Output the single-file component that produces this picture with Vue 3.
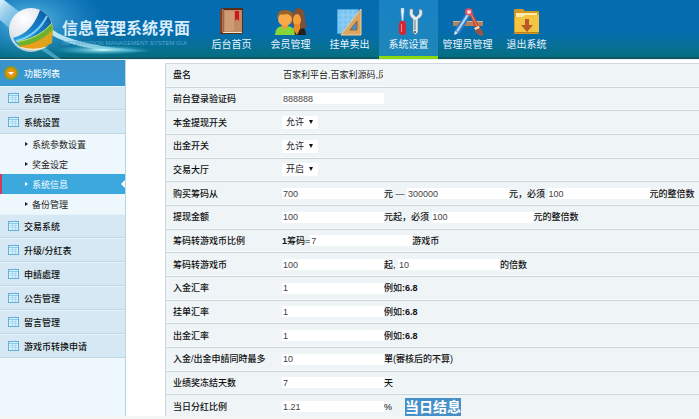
<script setup>
import { reactive, ref } from 'vue'

const navItems = [
    { id: 'home', label: '后台首页' },
    { id: 'members', label: '会员管理' },
    { id: 'orders', label: '挂单卖出' },
    { id: 'settings', label: '系统设置' },
    { id: 'admins', label: '管理员管理' },
    { id: 'logout', label: '退出系统' }
]
const activeNav = ref('settings')

const menu = [
    { label: '会员管理' },
    { label: '系统设置', children: ['系统参数设置', '奖金设定', '系统信息', '备份管理'] },
    { label: '交易系统' },
    { label: '升级/分红表' },
    { label: '申請處理' },
    { label: '公告管理' },
    { label: '留言管理' },
    { label: '游戏币转换申请' }
]
const activeMenu = ref('系统信息')

const form = reactive({
    name: '百家利平台,百家利源码,凤凰',
    code: '888888',
    principal: '允许',
    withdraw: '允许',
    hall: '开启',
    buyMin: '700',
    buyMax: '300000',
    buyStep: '100',
    cashMin: '100',
    cashStep: '100',
    ratio: '7',
    convertMin: '100',
    convertStep: '10',
    rateIn: '1',
    rateOrder: '1',
    rateOut: '1',
    maxApply: '10',
    freezeDays: '7',
    bonus: '1.21'
})

// a part is plain text, or a field bound to a key of the form
const rateHint = { text: '例如', strong: ':6.8' }
const rows = [
    { label: '盘名', parts: [{ key: 'name', plain: true }] },
    { label: '前台登录验证码', parts: [{ key: 'code' }] },
    { label: '本金提现开关', parts: [{ key: 'principal', options: ['允许', '禁止'] }] },
    { label: '出金开关', parts: [{ key: 'withdraw', options: ['允许', '禁止'] }] },
    { label: '交易大厅', parts: [{ key: 'hall', options: ['开启', '关闭'] }] },
    { label: '购买筹码从', parts: [{ key: 'buyMin' }, { text: '元 — ' }, { key: 'buyMax' }, { text: '元，必须 ' }, { key: 'buyStep' }, { text: '元的整倍数' }] },
    { label: '提现金额', parts: [{ key: 'cashMin' }, { text: '元起，必须 ' }, { key: 'cashStep' }, { text: '元的整倍数' }] },
    { label: '筹码转游戏币比例', parts: [{ strong: '1', text: '筹码=', lead: true }, { key: 'ratio' }, { text: '游戏币' }] },
    { label: '筹码转游戏币', parts: [{ key: 'convertMin' }, { text: '起, ' }, { key: 'convertStep' }, { text: '的倍数' }] },
    { label: '入金汇率', parts: [{ key: 'rateIn' }, rateHint] },
    { label: '挂单汇率', parts: [{ key: 'rateOrder' }, rateHint] },
    { label: '出金汇率', parts: [{ key: 'rateOut' }, rateHint] },
    { label: '入金/出金申請同時最多', parts: [{ key: 'maxApply' }, { text: '單(審核后的不算)' }] },
    { label: '业绩奖冻结天数', parts: [{ key: 'freezeDays' }, { text: '天' }] },
    { label: '当日分红比例', parts: [{ key: 'bonus' }, { text: '%' }], action: '当日结息' }
]

function firstKey(row) {
    return row.parts.find((part) => part.key).key
}
</script>

<template>
    <div class="page">
        <header class="top">
            <svg class="glow" viewBox="0 0 200 59" aria-hidden="true">
                <defs>
                    <linearGradient id="beam" x1="0" y1="0" x2="1" y2="1">
                        <stop offset="0" stop-color="#e4f6ff" stop-opacity=".95" />
                        <stop offset="1" stop-color="#6cc0e8" stop-opacity=".1" />
                    </linearGradient>
                    <linearGradient id="tail" x1="0" y1="0" x2="1" y2="0">
                        <stop offset="0" stop-color="#d2f6ff" stop-opacity=".9" />
                        <stop offset=".5" stop-color="#b4ecf6" stop-opacity=".7" />
                        <stop offset="1" stop-color="#5cc4e0" stop-opacity=".1" />
                    </linearGradient>
                    <radialGradient id="flare">
                        <stop offset="0" stop-color="#e4ffff" />
                        <stop offset=".3" stop-color="#8fe0f0" stop-opacity=".7" />
                        <stop offset="1" stop-color="#4cc0dc" stop-opacity="0" />
                    </radialGradient>
                    <radialGradient id="haze">
                        <stop offset="0" stop-color="#6cc4ec" stop-opacity=".9" />
                        <stop offset="1" stop-color="#2f95d0" stop-opacity="0" />
                    </radialGradient>
                </defs>
                <ellipse cx="30" cy="20" rx="75" ry="42" fill="url(#haze)" />
                <path d="M0 0h4l26 20-14 14L0 20z" fill="url(#beam)" />
                <path d="M50 28q24 19 104 23-70 4-104-17z" fill="url(#tail)" />
                <path d="M43 46l18 13h-6L40 49z" fill="#7cd0ea" opacity=".5" />
                <ellipse cx="102" cy="50" rx="48" ry="5" fill="url(#flare)" />
            </svg>
            <div class="brand">
                <svg class="logo" viewBox="0 0 46 46" aria-hidden="true">
                    <defs>
                        <radialGradient id="ball" cx=".35" cy=".25" r=".8">
                            <stop offset="0" stop-color="#fff" />
                            <stop offset=".5" stop-color="#e3e9ee" />
                            <stop offset="1" stop-color="#a8c4d2" />
                        </radialGradient>
                        <linearGradient id="leaf" x1="0" y1="0" x2="1" y2="0">
                            <stop offset="0" stop-color="#f0981a" />
                            <stop offset=".6" stop-color="#e8a01c" />
                            <stop offset="1" stop-color="#d4a820" />
                        </linearGradient>
                        <linearGradient id="wave" x1="0" y1="1" x2="1" y2="0">
                            <stop offset="0" stop-color="#2fa6e4" />
                            <stop offset=".6" stop-color="#1478c2" />
                            <stop offset="1" stop-color="#0a5298" />
                        </linearGradient>
                    </defs>
                    <circle cx="23" cy="23" r="22" fill="url(#ball)" />
                    <path d="M5 31Q24 26 32 3q9 4 12 14Q34 35 11 39q-4-3-6-8z" fill="url(#wave)" />
                    <path d="M8 34Q29 29 39 9" fill="none" stroke="#7cd2f6" stroke-width="2" />
                    <path d="M9 35Q32 31 44 16l1 8Q34 40 12 40z" fill="#6db12f" />
                    <path d="M9 35Q32 31 44 16" fill="none" stroke="#c8e86c" />
                    <path d="M11 39Q32 37 45 22l-1 14Q28 46 11 39z" fill="url(#leaf)" />
                    <path d="M7 38q16 7 34 1-16 9-34-1z" fill="#f8e8b8" />
                </svg>
                <div class="brand-text">
                    <h1>信息管理系统界面</h1>
                    <p>INFORMATION MANAGEMENT SYSTEM GUI</p>
                </div>
            </div>

            <nav class="nav">
                <a v-for="item in navItems" :key="item.id" href="#" class="nav-item"
                    :class="{ active: activeNav === item.id }" @click.prevent="activeNav = item.id">
                    <svg class="nav-icon" viewBox="0 0 32 28" aria-hidden="true">
                        <g v-if="item.id === 'home'">
                            <path d="M4 2l3-2h20v25l-2 1H5l-1-1z" fill="#5c2a18" />
                            <path d="M8 2h18v22H8z" fill="#c08b62" />
                            <path d="M9 3h9v20H9z" fill="#cd9c74" />
                            <path d="M4 2l3-1v24H5l-1-1z" fill="#8a3d1d" />
                            <path d="M7 1v23" stroke="#e8c8a8" stroke-width=".8" />
                            <path d="M7 24h19v1H7z" fill="#f1e2cb" />
                            <path d="M19 3h4v10l-2-2-2 2z" fill="#d3131c" />
                        </g>
                        <g v-else-if="item.id === 'members'">
                            <path d="M19 27q-1-8 4-9 8 0 8 9z" fill="#272016" />
                            <path d="M17 17q-2-15 6-17 7 0 7 10 0 6 2 9l-6 2z" fill="#7d5038" />
                            <ellipse cx="22" cy="12" rx="4" ry="6" fill="#f3a03a" />
                            <path d="M20 16h5v5l-3 6-4-6z" fill="#e88a25" />
                            <path d="M0 27q0-8 7-9h6q7 1 7 9z" fill="#86d63b" />
                            <path d="M7 16h6v3q-3 4-6 0z" fill="#f09a35" />
                            <circle cx="10" cy="11" r="7" fill="#f8a948" />
                            <path d="M2 11Q1 2 10 2q9 0 8 9-2-4-6-5-5 1-8 0-1 2-2 5z" fill="#9b6228" />
                        </g>
                        <g v-else-if="item.id === 'orders'">
                            <rect x="3" y="1" width="22" height="25" rx="1" fill="#4aaae6" />
                            <path d="M4 2h20v8L9 25H4z" fill="#7cc4f0" />
                            <path d="M9 2v23M14 2v18M19 2v12M4 7h20M4 12h16M4 17h12" stroke="#a4daf8" stroke-width=".6" />
                            <path d="M27 1v26H7z" fill="#dca562" />
                            <path d="M27 1v26H7z" fill="none" stroke="#f0cd98" />
                            <path d="M23 13v9h-7z" fill="#3f94cb" stroke="#94642c" />
                        </g>
                        <g v-else-if="item.id === 'settings'">
                            <path d="M8 0h3v4l-1 9H9L8 4z" fill="#e9f4fa" stroke="#82b7d6" stroke-width=".6" />
                            <path d="M7 13h5l1 4v8l-2 2H8l-2-2v-8z" fill="#d52631" />
                            <path d="M8 16h1v8H8z" fill="#ff8f8f" />
                            <path d="M17 1q-2 7 3 10v13q2 5 5 0V11q6-3 4-9l-3-1v5l-3 3-3-3V1z" fill="#e5e9ec" stroke="#657b8a" stroke-width=".6" />
                            <path d="M22 12v10" stroke="#657b8a" />
                            <circle cx="22" cy="24" r="1" fill="#24485f" />
                        </g>
                        <g v-else-if="item.id === 'admins'">
                            <path d="M1 13h30v5H1z" fill="#b0825a" />
                            <path d="M1 13h30v1H1z" fill="#dab38a" />
                            <path d="M17 5l4 1 7 14-4 2z" fill="#c2473a" />
                            <path d="M19 6l7 14" stroke="#ec8a78" />
                            <path d="M14 5l5 2L8 25l-6 2 1-6z" fill="#2f78c4" />
                            <path d="M15 6l2 1L6 24l-2-1z" fill="#a8d8f6" />
                            <path d="M2 27l1-4 3 2z" fill="#e8eef2" />
                            <path d="M22 20l5-2 1 3-4 2z" fill="#f0e0c0" />
                            <path d="M23 22l5-2q4 4 3 8-7-1-8-6z" fill="#9d5440" />
                            <path d="M13 2l3-2 4 1 1 5-3 2-5-2z" fill="#e05060" />
                            <circle cx="17" cy="4" r="2" fill="#f8dce4" />
                        </g>
                        <g v-else>
                            <path d="M3 2l1-1h8l2 2h13l1 1v21l-1 1H4l-1-1z" fill="#d09a24" />
                            <path d="M5 5h21v4H5z" fill="#fbeaa8" />
                            <path d="M4 9h8l2-2h14v18H4z" fill="#f3c442" />
                            <path d="M4 24h24v1H4z" fill="#b98218" />
                            <path d="M14 11h4v6h4l-6 7-6-7h4z" fill="#b9582a" />
                        </g>
                    </svg>
                    <span>{{ item.label }}</span>
                </a>
            </nav>
        </header>

        <div class="body">
            <aside class="side">
                <h2 class="side-title">
                    <svg viewBox="0 0 14 14" aria-hidden="true">
                        <circle cx="7" cy="7" r="7" fill="#8d9c18" />
                        <circle cx="7" cy="7" r="5" fill="#e8930f" />
                        <path d="M4 6h6L7 9z" fill="#fff" />
                    </svg>
                    功能列表
                </h2>
                <ul class="menu">
                    <li v-for="group in menu" :key="group.label">
                        <a href="#" class="menu-item" @click.prevent>
                            <svg viewBox="0 0 12 12" aria-hidden="true">
                                <rect x=".5" y="1.500" width="10" height="9" fill="#d7effb" stroke="#5fb0d8" />
                                <path d="M1 3.500h9" stroke="#8cc9e6" />
                                <path d="M2 5.500h7M2 7.500h7M4.500 4v6M7.500 4v6" stroke="#9fd2ea" stroke-width=".7" />
                            </svg>
                            {{ group.label }}
                        </a>
                        <ul v-if="group.children" class="submenu">
                            <li v-for="child in group.children" :key="child">
                                <a href="#" class="submenu-item" :class="{ active: activeMenu === child }"
                                    @click.prevent="activeMenu = child">{{ child }}</a>
                            </li>
                        </ul>
                    </li>
                </ul>
            </aside>

            <main class="content">
                <table class="settings">
                    <tbody>
                        <tr v-for="row in rows" :key="row.label">
                            <th scope="row"><label :for="firstKey(row)">{{ row.label }}</label></th>
                            <td>
                                <div class="parts">
                                    <template v-for="(part, i) in row.parts" :key="i">
                                        <span v-if="part.lead" class="note"><b>{{ part.strong }}</b>{{ part.text }}</span>
                                        <span v-else-if="!part.key" class="note">{{ part.text }}<b v-if="part.strong">{{ part.strong }}</b></span>
                                        <span v-else-if="part.options" class="picker">
                                            <select :id="part.key" v-model="form[part.key]">
                                                <option v-for="option in part.options" :key="option">{{ option }}</option>
                                            </select>
                                        </span>
                                        <input v-else :id="part.key" v-model="form[part.key]" type="text"
                                            :class="{ plain: part.plain }" :aria-label="row.label">
                                    </template>
                                    <button v-if="row.action" type="button" class="action">{{ row.action }}</button>
                                </div>
                            </td>
                        </tr>
                    </tbody>
                </table>
            </main>
        </div>
        <div class="edge"></div>
    </div>
</template>

<style>
body {
    margin: 0;
    background: #fff;
}
</style>

<style scoped>
.page {
    position: relative;
    display: flex;
    flex-direction: column;
    height: 100vh;
    overflow: hidden;
    font-family: "Liberation Sans", "Noto Sans CJK SC", sans-serif;
    font-size: 9px;
    color: #111;
}

a {
    color: inherit;
    text-decoration: none;
}

ul {
    margin: 0;
    padding: 0;
    list-style: none;
}

.top {
    position: relative;
    display: flex;
    flex: none;
    height: 59px;
    background: linear-gradient(#056cb0 0, #056cb0 50%, #07709a 75%, #046e82 96%, #17525f 98%);
}

.glow {
    position: absolute;
    left: 0;
    top: 0;
    width: 200px;
    height: 59px;
}

.brand {
    position: relative;
    display: flex;
    flex: none;
    box-sizing: border-box;
    width: 202px;
    padding: 7px 0 0 8px;
    gap: 8px;
}

.logo {
    flex: none;
    width: 46px;
    height: 46px;
}

.brand-text {
    padding-top: 12px;
    white-space: nowrap;
}

.brand-text h1 {
    margin: 0;
    font-size: 16px;
    font-weight: 700;
    line-height: 20px;
    color: #d8ecf8;
}

.brand-text p {
    margin: 1px 0 0;
    font-size: 6px;
    line-height: 6px;
    color: #5aa6d2;
}

.nav {
    display: flex;
}

.nav-item {
    display: flex;
    flex-direction: column;
    align-items: center;
    box-sizing: border-box;
    width: 59px;
    padding-top: 8px;
    font-size: 10px;
    line-height: 14px;
    color: #eaf6ff;
    white-space: nowrap;
}

.nav-item.active {
    background: linear-gradient(#1782c6, #1f86b8);
    border-bottom: 3px solid #8ad80f;
}

.nav-icon {
    width: 32px;
    height: 28px;
    margin-bottom: 2px;
}

.body {
    display: flex;
    flex: 1;
    min-height: 0;
    border-top: 1px solid #dff4f8;
}

.side {
    flex: none;
    box-sizing: border-box;
    width: 126px;
    border-right: 1px solid #b4d8e8;
    background: #eef7fc;
}

.side-title {
    display: flex;
    align-items: center;
    gap: 6px;
    height: 26px;
    margin: 0;
    padding-left: 4px;
    background: linear-gradient(#3a92cc, #3797d0);
    font-size: 9px;
    font-weight: 500;
    color: #eefaff;
}

.side-title svg {
    width: 14px;
    height: 14px;
}

.menu-item {
    display: flex;
    align-items: center;
    gap: 4px;
    box-sizing: border-box;
    height: 24px;
    padding-left: 8px;
    border-top: 1px solid #e6f3fa;
    border-bottom: 1px solid #bcd9e6;
    background: #d5e8f3;
    font-weight: 500;
}

.menu-item svg {
    width: 12px;
    height: 12px;
}

.submenu-item {
    position: relative;
    display: flex;
    align-items: center;
    gap: 4px;
    box-sizing: border-box;
    height: 20px;
    padding-left: 23px;
    border-left: 2px solid transparent;
    color: #222;
}

.submenu-item::before {
    content: "";
    border: 2px solid transparent;
    border-left: 3px solid currentColor;
    border-right: 0;
}

.submenu-item.active {
    border-left-color: #d63a58;
    background: #3ba9de;
    color: #fff;
}

.submenu-item.active::after {
    content: "";
    position: absolute;
    right: 0;
    top: 6px;
    border: 4px solid transparent;
    border-left: 0;
    border-right-color: #fff;
}

.content {
    flex: 1;
    min-width: 0;
    padding: 3px 0 0 39px;
}

.settings {
    width: 100%;
    height: 100%;
    border-collapse: separate;
    border-spacing: 0;
    border-left: 1px solid #ccd6da;
    border-top: 1px solid #d4d6e0;
    background: #eff4f6;
}

.settings th,
.settings td {
    padding: 0;
    border-bottom: 1px solid #cbd6d8;
    box-shadow: inset 0 -1px #f8fbfb;
    line-height: 12px;
    text-align: left;
    white-space: nowrap;
}

.settings th {
    width: 109px;
    padding-left: 7px;
    font-weight: 500;
}

.parts {
    display: flex;
    align-items: center;
    height: 18px;
}

.note {
    font-weight: 500;
    white-space: pre;
}

input {
    box-sizing: border-box;
    width: 102px;
    height: 11px;
    padding: 0 1px;
    border: 0;
    background: #fff;
    font: inherit;
    color: #444;
}

input.plain {
    background: #f5f9fa;
    color: #222;
}

.picker {
    position: relative;
    display: flex;
}

.picker::after {
    content: "";
    position: absolute;
    right: 5px;
    top: 4px;
    border: 2px solid transparent;
    border-top: 4px solid #111;
    border-bottom: 0;
    pointer-events: none;
}

select {
    appearance: none;
    width: 36px;
    height: 13px;
    padding: 0 0 0 4px;
    border: 0;
    background: #fff;
    font: inherit;
    line-height: 13px;
    color: #222;
}

.action {
    height: 18px;
    margin-left: 13px;
    padding: 0;
    border: 0;
    background: #4690c8;
    font: inherit;
    font-size: 14px;
    font-weight: 700;
    line-height: 18px;
    color: #fff;
}

.edge {
    position: absolute;
    right: 0;
    bottom: 0;
    left: 0;
    height: 3px;
    background: #f4f5f5;
}
</style>
